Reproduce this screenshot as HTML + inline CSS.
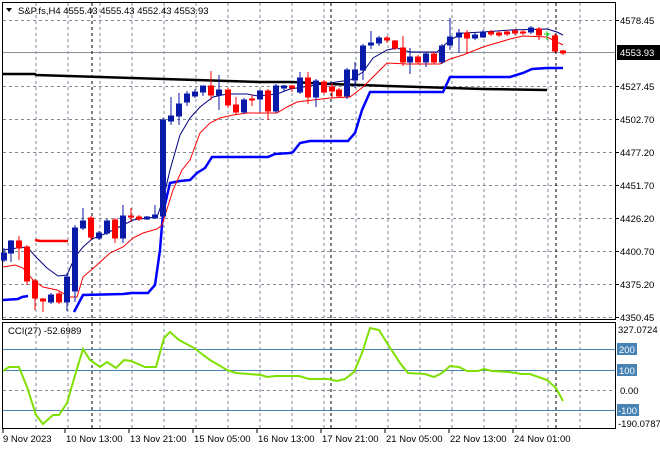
<!DOCTYPE html>
<html><head><meta charset="utf-8"><style>
html,body{margin:0;padding:0;background:#fff;}
svg{display:block;font-family:"Liberation Sans",sans-serif;}
</style></head><body>
<svg width="660" height="450" viewBox="0 0 660 450" xmlns="http://www.w3.org/2000/svg">
<rect width="660" height="450" fill="#fff"/>
<!-- grid main -->
<g stroke="#7f8a96" stroke-width="1" stroke-dasharray="3,3" fill="none">
<path d="M36 3V319M68 3V319M100 3V319M132 3V319M164 3V319M196 3V319M228 3V319M260 3V319M292 3V319M324 3V319M356 3V319M388 3V319M420 3V319M452 3V319M484 3V319M516 3V319M548 3V319M580 3V319"/>
<path d="M3 20.5H615M3 86.5H615M3 119.5H615M3 152.5H615M3 185.5H615M3 218.5H615M3 251.5H615M3 284.5H615M3 317.5H615"/>
<path d="M36 323V428M68 323V428M100 323V428M132 323V428M164 323V428M196 323V428M228 323V428M260 323V428M292 323V428M324 323V428M356 323V428M388 323V428M420 323V428M452 323V428M484 323V428M516 323V428M548 323V428M580 323V428M3 390.5H615"/>
</g>
<path d="M3 52.5H615" stroke="#8a949e" stroke-width="1"/>
<g stroke="#000" stroke-width="1" stroke-dasharray="3,3"><path d="M92 3V319M331 3V319M556 3V319M92 323V428M331 323V428M556 323V428"/></g>
<!-- borders -->
<rect x="2.5" y="2.5" width="613" height="317" fill="none" stroke="#000"/>
<rect x="2.5" y="322.5" width="613" height="106" fill="none" stroke="#000"/>
<!-- black MA -->
<polyline fill="none" stroke="#000" stroke-width="2.5" points="3,74 35,74 36,75 68,76 100,77 132,78 164,79 196,80 228,81 260,82 292,82 330,84 388,86 420,87 483,89 547,90"/>
<!-- blue thick -->
<polyline fill="none" stroke="#0000ff" stroke-width="2.5" points="3,300 18,299 22,297 28,296"/>
<polyline fill="none" stroke="#ff0000" stroke-width="2.5" points="35,240 40,241 68,241"/>
<polyline fill="none" stroke="#0000ff" stroke-width="2.5" points="74,312 83,295 123,294 132,293 148,293 155,285 160,250 163,213 170,183 180,181 190,180 197,173 205,168 212,157 268,157 275,154 290,153 293,152 300,143 310,141 348,141 355,133 362,110 370,92 443,92 450,77 510,77 523,73 532,69 547,68 563,68"/>
<!-- red thin -->
<polyline fill="none" stroke="#ff0000" stroke-width="1" points="3,267 15,265 23,268 33,280 43,287 57,290 70,297 77,297 83,277 97,265 110,253 123,247 133,238 143,233 157,229 162,225 173,190 182,170 190,160 200,133 210,123 220,118 233,115 247,113 277,113 287,107 297,102 313,100 330,98 350,97 363,87 370,80 387,63 407,64 440,64 450,59 463,55 483,47 510,39 523,36 547,37 563,45"/>
<!-- navy thin -->
<polyline fill="none" stroke="#000080" stroke-width="1" points="3,250 17,248 27,247 37,258 47,268 58,276 67,275 75,257 83,247 92,239 107,233 127,223 133,220 147,218 157,217 163,200 170,170 180,135 190,118 200,107 213,97 227,94 247,94 258,96 277,94 290,89 310,86 330,83 350,80 363,72 373,58 387,50 397,48 410,52 437,52 450,40 463,33 483,32 510,30 547,29 557,32 563,35"/>
<!-- candles blue -->
<g stroke="#0a1aa8" fill="#0a1aa8">
<path d="M4 248V262M11 240V262M51 293V304M67 273V311M75 225V302M83 208V230M99 231V240M107 219V235M123 205V243M147 216V220M155 205V218M163 118V218M171 97V125M179 93V125M187 91V106M195 89V98M203 86V96M219 75V110M244 98V114M260 90V112M276 84V113M284 85V92M300 72V94M316 79V107M347 68V99M355 62V88M363 44V80M371 31V49M379 36V46M410 48V74M426 52V67M442 44V64M450 18V50M459 29V53M475 33V40M483 30V38M531 26V34"/>
<rect x="1.5" y="253" width="5" height="7"/><rect x="8.5" y="241" width="5" height="12"/><rect x="48.5" y="295" width="5" height="7"/><rect x="64.5" y="277" width="5" height="25"/><rect x="72.5" y="228" width="5" height="63"/><rect x="80.5" y="221" width="5" height="7"/><rect x="96.5" y="233" width="5" height="5"/><rect x="104.5" y="221" width="5" height="12"/><rect x="120.5" y="216" width="5" height="22"/><rect x="144.5" y="217" width="5" height="2"/><rect x="152.5" y="215" width="5" height="3"/><rect x="160.5" y="120" width="5" height="96"/><rect x="168.5" y="116" width="5" height="5"/><rect x="176.5" y="104" width="5" height="12"/><rect x="184.5" y="94" width="5" height="8"/><rect x="192.5" y="92" width="5" height="4"/><rect x="200.5" y="86" width="5" height="6"/><rect x="216.5" y="90" width="5" height="5"/><rect x="241.5" y="100" width="5" height="12"/><rect x="257.5" y="91" width="5" height="8"/><rect x="273.5" y="86" width="5" height="25"/><rect x="281.5" y="86" width="5" height="2"/><rect x="297.5" y="78" width="5" height="14"/><rect x="313.5" y="81" width="5" height="16"/><rect x="344.5" y="70" width="5" height="26"/><rect x="352.5" y="70" width="5" height="10"/><rect x="360.5" y="46" width="5" height="24"/><rect x="368.5" y="43" width="5" height="2"/><rect x="376.5" y="38" width="5" height="5"/><rect x="407.5" y="57" width="5" height="5"/><rect x="423.5" y="54" width="5" height="8"/><rect x="439.5" y="46" width="5" height="16"/><rect x="447.5" y="37" width="5" height="8"/><rect x="456.5" y="33" width="5" height="4"/><rect x="472.5" y="35" width="5" height="3"/><rect x="480.5" y="32" width="5" height="5"/><rect x="528.5" y="28" width="5" height="4"/>
</g>
<!-- candles red -->
<g stroke="#ff0000" fill="#ff0000">
<path d="M19 236V260M27 245V285M35 279V310M43 298V312M59 292V304M91 216V240M115 218V243M131 208V222M139 215V221M211 71V100M228 88V108M236 97V115M252 95V106M268 89V120M292 85V92M308 72V104M324 80V94M332 83V98M339 88V98M387 36V43M395 40V50M403 36V66M418 55V64M434 52V64M467 30V53M491 30V36M499 31V37M507 30V36M515 29V35M523 30V35M539 27V40M555 34V53M563 50V55"/>
<rect x="16.5" y="241" width="5" height="7"/><rect x="24.5" y="247" width="5" height="34"/><rect x="32.5" y="281" width="5" height="17"/><rect x="40.5" y="299" width="5" height="2"/><rect x="56.5" y="294" width="5" height="8"/><rect x="88.5" y="218" width="5" height="19"/><rect x="112.5" y="220" width="5" height="18"/><rect x="128.5" y="216" width="5" height="1"/><rect x="136.5" y="217" width="5" height="2"/><rect x="208.5" y="86" width="5" height="9"/><rect x="225.5" y="90" width="5" height="15"/><rect x="233.5" y="105" width="5" height="7"/><rect x="249.5" y="99" width="5" height="1"/><rect x="265.5" y="91" width="5" height="20"/><rect x="289.5" y="86" width="5" height="2"/><rect x="305.5" y="78" width="5" height="19"/><rect x="321.5" y="82" width="5" height="10"/><rect x="329.5" y="87" width="5" height="4"/><rect x="336.5" y="90" width="5" height="6"/><rect x="384.5" y="38" width="5" height="2"/><rect x="392.5" y="41" width="5" height="7"/><rect x="400.5" y="48" width="5" height="14"/><rect x="415.5" y="57" width="5" height="5"/><rect x="431.5" y="54" width="5" height="8"/><rect x="464.5" y="33" width="5" height="5"/><rect x="488.5" y="32" width="5" height="2"/><rect x="496.5" y="33" width="5" height="2"/><rect x="504.5" y="32" width="5" height="2"/><rect x="512.5" y="31" width="5" height="2"/><rect x="520.5" y="32" width="5" height="1"/><rect x="536.5" y="29" width="5" height="6"/><rect x="552.5" y="36" width="5" height="15"/><rect x="560.5" y="51" width="5" height="2"/>
</g>
<path d="M547 31V40M544 34H550" stroke="#00d000"/>
<!-- CCI levels -->
<path d="M3 349.5H615M3 370.5H615M3 410.5H615" stroke="#4682b4" stroke-width="1"/>
<polyline fill="none" stroke="#7fe000" stroke-width="2" points="3,371 9,367 19,367 27,387 36,415 43,424 53,415 59,415 67,403 76,372 83,349 90,360 100,367 107,362 116,368 124,360 131,361 145,367 156,367 164,338 170,332 179,340 194,348 210,360 227,370 236,373 261,375 267,377 276,376 299,376 309,379 328,379 337,381 345,379 354,372 362,353 370,328 379,330 387,343 400,363 408,373 425,374 434,377 442,373 450,366 459,367 467,371 478,371 484,369 492,371 509,372 522,374 530,374 547,380 556,388 563,401"/>
<!-- title -->
<path d="M6 8H12L9 12Z" fill="#000"/>
<text x="18" y="14" font-size="9.5" fill="#000">S&amp;P.fs,H4  4555.43 4555.43 4552.43 4553.93</text>
<text x="8" y="334" font-size="9.5" fill="#000">CCI(27) -52.6989</text>
<!-- price axis -->
<g font-size="9.5" fill="#000">
<text x="620" y="24">4578.45</text>
<text x="620" y="90">4527.45</text>
<text x="620" y="123">4502.70</text>
<text x="620" y="156">4477.20</text>
<text x="620" y="189">4451.70</text>
<text x="620" y="222">4426.20</text>
<text x="620" y="255">4400.70</text>
<text x="620" y="288">4375.20</text>
<text x="620" y="321">4350.45</text>
<text x="618" y="333">327.0724</text>
<text x="620" y="394">0.00</text>
<text x="618" y="427">-190.0787</text>
</g>
<path d="M615 20.5H619M615 86.5H619M615 119.5H619M615 152.5H619M615 185.5H619M615 218.5H619M615 251.5H619M615 284.5H619M615 317.5H619" stroke="#000"/>
<rect x="617" y="45" width="43" height="15" fill="#000"/>
<text x="620" y="56" font-size="9.5" fill="#fff">4553.93</text>
<g fill="#4682b4"><rect x="617" y="343" width="20" height="12"/><rect x="617" y="364" width="20" height="12"/><rect x="617" y="404" width="22" height="12"/></g>
<g font-size="9.5" fill="#fff"><text x="619" y="353">200</text><text x="619" y="374">100</text><text x="618" y="414">-100</text></g>
<!-- time axis -->
<path d="M3 429V433M65 429V433M129 429V433M193 429V433M257 429V433M321 429V433M385 429V433M449 429V433M513 429V433" stroke="#000"/>
<g font-size="9.5" fill="#000">
<text x="3" y="442">9 Nov 2023</text>
<text x="66" y="442">10 Nov 13:00</text>
<text x="130" y="442">13 Nov 21:00</text>
<text x="194" y="442">15 Nov 05:00</text>
<text x="258" y="442">16 Nov 13:00</text>
<text x="322" y="442">17 Nov 21:00</text>
<text x="386" y="442">21 Nov 05:00</text>
<text x="450" y="442">22 Nov 13:00</text>
<text x="514" y="442">24 Nov 01:00</text>
</g>
</svg>
</body></html>
